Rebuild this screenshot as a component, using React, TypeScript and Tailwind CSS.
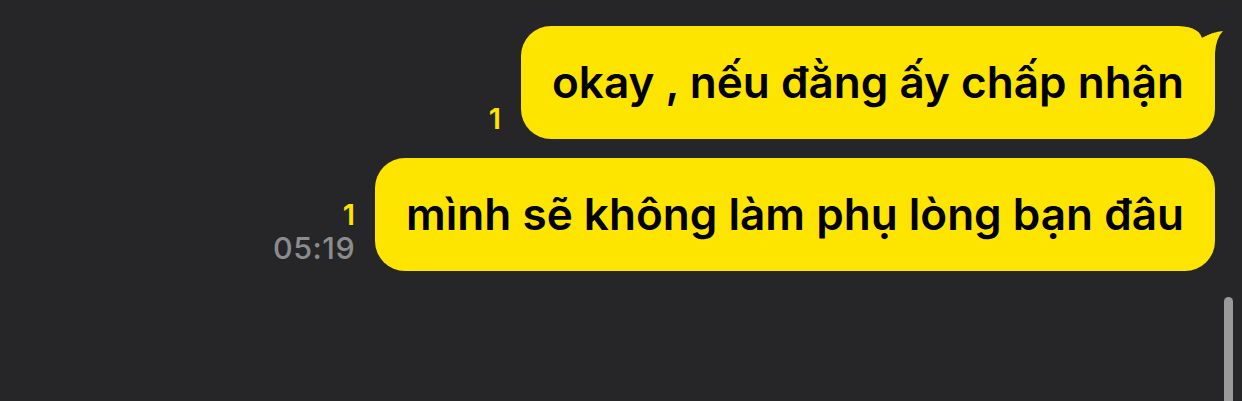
import React from 'react';

interface Message {
  text: string;
  unread: number;
  time?: string;
  tail?: boolean;
}

const messages: Message[] = [
  { text: 'okay , nếu đằng ấy chấp nhận', unread: 1, tail: true },
  { text: 'mình sẽ không làm phụ lòng bạn đâu', unread: 1, time: '05:19' },
];

const Tail = () => (
  <svg
    className="absolute top-0 right-[-10px]"
    width="50"
    height="30"
    viewBox="0 0 50 30"
  >
    <path d="M0 0 C18 0 25 5 27 12 Q38 6 48 5 L50 0 Z" fill="#262628" />
    <path d="M27 12 Q38 6 48 5 Q41 12 40 27 L40 12 Z" fill="#FEE500" />
  </svg>
);

export default function App() {
  return (
    <div
      className="relative w-[1242px] h-[401px] overflow-hidden bg-[#262628]"
      style={{ fontFamily: 'Inter, "Noto Sans", sans-serif' }}
    >
      <div className="flex flex-col items-end gap-[19px] pt-[26px] pr-[27px]">
        {messages.map((m, i) => (
          <div key={i} className="flex items-end gap-[20px]">
            <div className="flex flex-col items-end pb-[5px]">
              <span className="text-[29px] leading-[30px] font-semibold text-[#FEE500]">
                {m.unread}
              </span>
              {m.time && (
                <span className="text-[30.5px] leading-[36px] font-medium tracking-[0.5px] text-[#8c8c8e]">
                  {m.time}
                </span>
              )}
            </div>
            <div
              className={`relative flex h-[113px] items-center px-[31px] bg-[#FEE500] rounded-[30px] ${
                m.tail ? 'rounded-tr-none' : ''
              }`}
            >
              <span className="text-[44.1px] font-semibold text-black whitespace-nowrap">
                {m.text}
              </span>
              {m.tail && <Tail />}
            </div>
          </div>
        ))}
      </div>
      <div className="absolute left-[1224px] top-[297px] w-[9px] h-[140px] rounded-full bg-[#9a9a9a]" />
    </div>
  );
}
